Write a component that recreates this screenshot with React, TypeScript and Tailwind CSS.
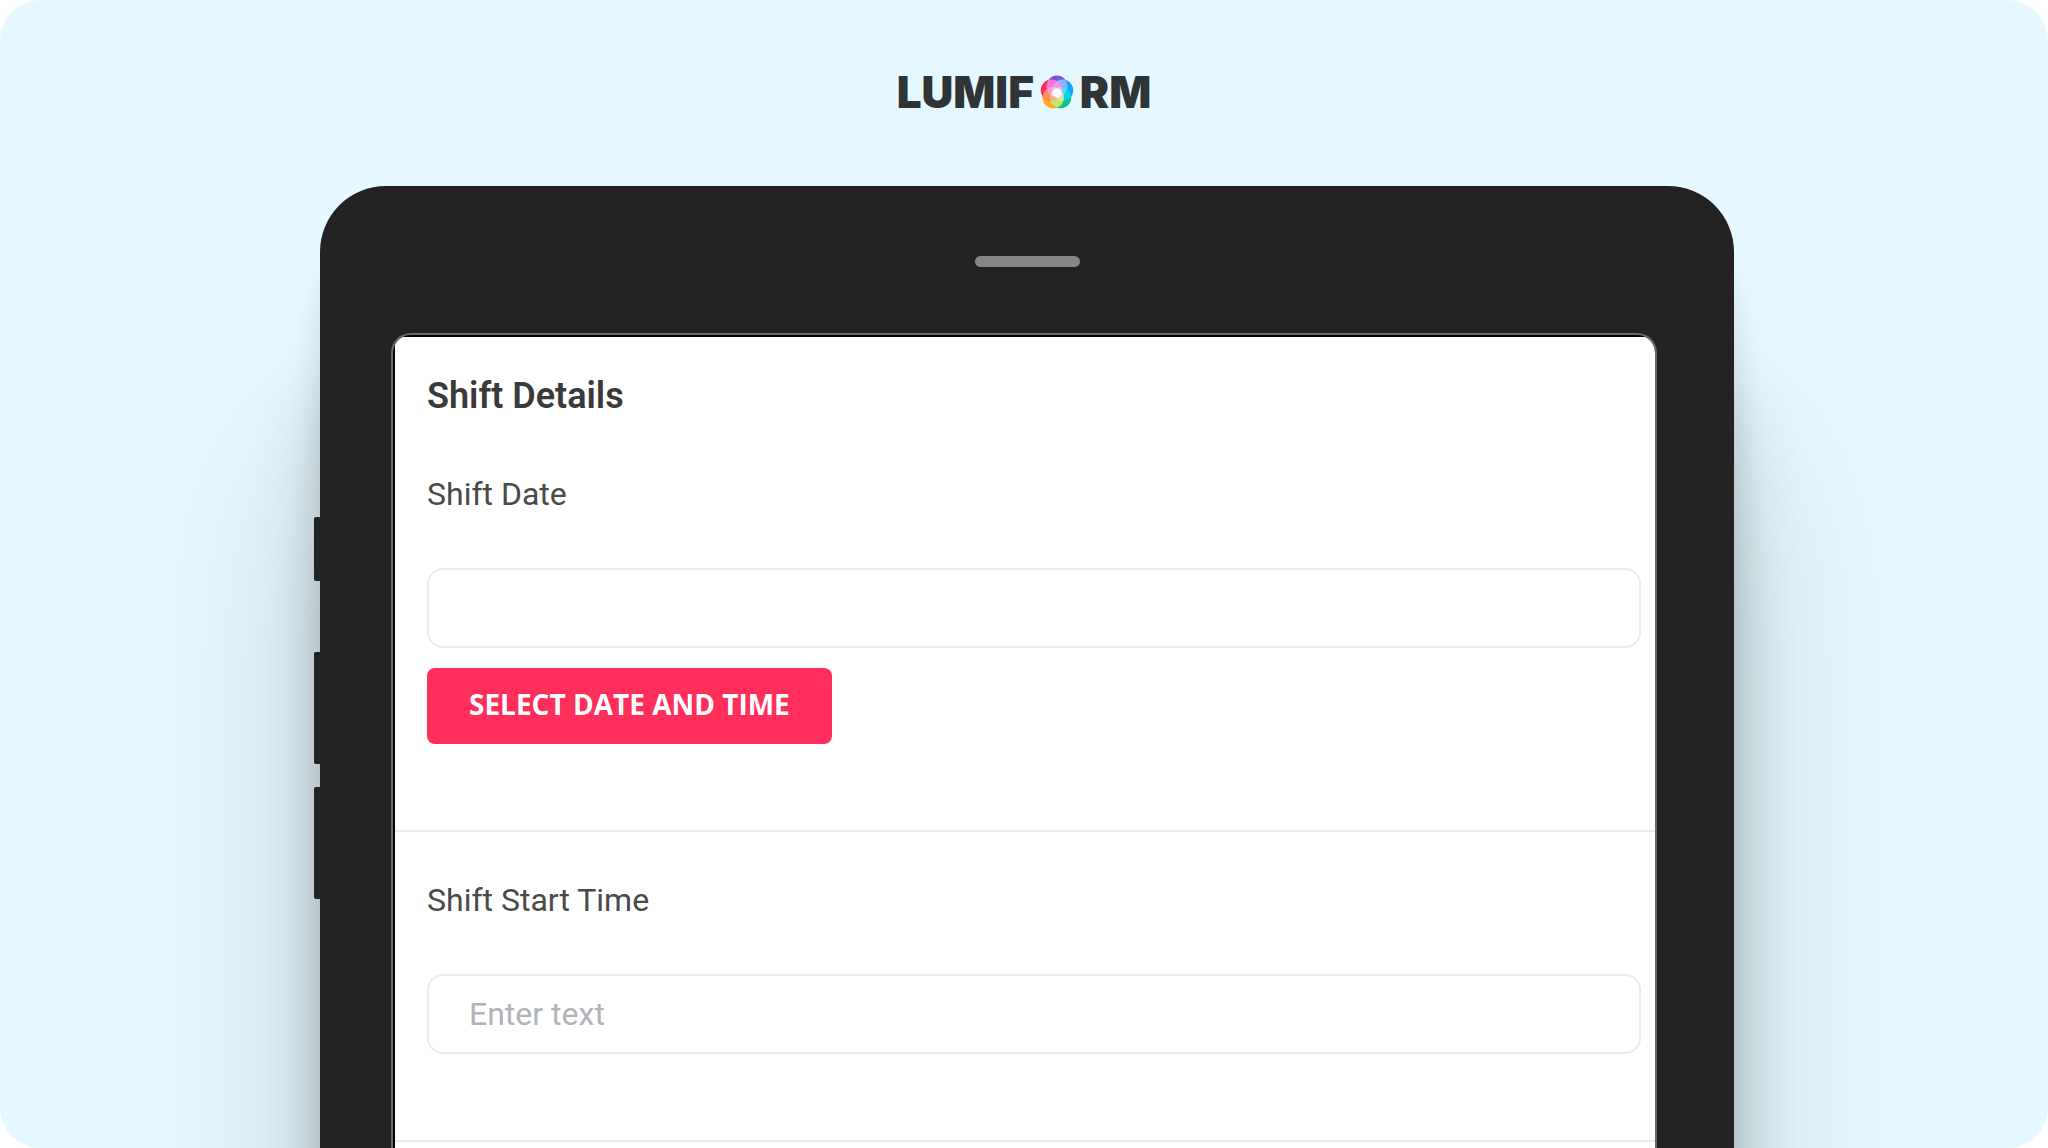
const petals = [
    { id: "top", cx: 16, cy: 10.5, fill: "#7b55d3" },
    { id: "right", cx: 21.3, cy: 14.3, fill: "#0aa5ff" },
    { id: "low-right", cx: 19.4, cy: 21.3, fill: "#0cc48a" },
    { id: "low-left", cx: 12.4, cy: 21.3, fill: "#ffa62b" },
    { id: "left", cx: 10.7, cy: 14.3, fill: "#fa2d5f" },
];

// colour of the lens shared by a petal and the next one clockwise
const overlaps = ["#8fb2ff", "#10cfe8", "#c4e86a", "#ff8f62", "#f774d8"];

// colour of the lens shared by a petal and the one after next
const innerOverlaps = ["#a8e4ff", "#d5f5ff", "#ffe08a", "#ffd0c0", "#f3b6ff"];

function Flower() {
    return (
        <svg viewBox="0 0 32 32" className="size-[34px]" aria-hidden="true">
            <defs>
                {petals.map((p) => (
                    <clipPath id={p.id} key={p.id}>
                        <circle cx={p.cx} cy={p.cy} r="10" />
                    </clipPath>
                ))}
            </defs>
            {petals.map((p) => (
                <circle key={p.id} cx={p.cx} cy={p.cy} r="10" fill={p.fill} />
            ))}
            {petals.map((p, i) => {
                const next = petals[(i + 1) % 5];
                return (
                    <g key={p.id} clipPath={`url(#${p.id})`}>
                        <circle cx={next.cx} cy={next.cy} r="10" fill={overlaps[i]} />
                    </g>
                );
            })}
            {petals.map((p, i) => {
                const across = petals[(i + 2) % 5];
                return (
                    <g key={p.id} clipPath={`url(#${p.id})`}>
                        <circle cx={across.cx} cy={across.cy} r="10" fill={innerOverlaps[i]} opacity="0.45" />
                    </g>
                );
            })}
            <circle cx="16" cy="17" r="4.5" fill="#ffffff" opacity="0.85" />
        </svg>
    );
}

function Logo() {
    return (
        <div className="flex items-center justify-center gap-1.5 font-['Inter',sans-serif] text-[44px] leading-[44px] font-black text-[#2f3437]">
            <span>LUMIF</span>
            <Flower />
            <span>RM</span>
        </div>
    );
}

const fieldClass =
    "mt-14 block h-20 w-full rounded-2xl border-2 border-[#ebebeb] bg-white px-10 text-[32px] text-[#3c3c3c] placeholder:text-[#b0b3b8]";

export default function App() {
    return (
        <div className="bg-white">
            <main className="flex h-screen flex-col overflow-hidden rounded-[40px] bg-[#e6f8ff] pt-[70px] font-['Roboto',sans-serif]">
                <Logo />

                <div className="mt-[72px] flex flex-1 flex-col pr-[314px] pl-80">
                    <div className="relative flex flex-1 flex-col rounded-t-[66px] bg-[#232122] pt-[70px] shadow-[0_70px_30px_rgba(0,0,0,0.12),0_180px_70px_rgba(0,0,0,0.14),0_270px_180px_rgba(0,0,0,0.18)]">
                        {/* side buttons */}
                        <div className="absolute top-[331px] -left-[6px] flex w-2 flex-col">
                            <span className="h-16 rounded-l-xs bg-[#212223]" />
                            <span className="mt-[71px] h-28 rounded-l-xs bg-[#212223]" />
                            <span className="mt-[23px] h-28 rounded-l-xs bg-[#212223]" />
                        </div>

                        <div className="mx-auto h-[11px] w-[105px] rounded-full bg-[#868686]" />

                        <div className="mt-[66px] mr-[77px] ml-[71px] flex flex-1 flex-col overflow-hidden rounded-t-[20px] border-2 border-b-0 border-[#6a6969] bg-black pt-[2px] pl-[2px]">
                            <form className="flex-1 bg-white">
                                <section className="border-b-2 border-[#ebebeb] pt-[41px] pr-[14px] pb-[86px] pl-8">
                                    <h1 className="text-[36px] leading-9 font-semibold text-[#3a3a3a]">
                                        Shift Details
                                    </h1>
                                    <label htmlFor="shift-date" className="mt-[62px] block text-[32px] leading-9 text-[#4a4a4a]">
                                        Shift Date
                                    </label>
                                    <input id="shift-date" type="text" className={fieldClass} />
                                    <button
                                        type="button"
                                        className="mt-5 h-[76px] rounded-lg bg-[#ff2e5b] px-[42px] pb-1 font-['Open_Sans',sans-serif] text-[28px] font-bold text-white"
                                    >
                                        SELECT DATE AND TIME
                                    </button>
                                </section>

                                <section className="border-b-2 border-[#ebebeb] pt-[50px] pr-[14px] pb-[86px] pl-8">
                                    <label htmlFor="shift-start" className="block text-[32px] leading-9 text-[#4a4a4a]">
                                        Shift Start Time
                                    </label>
                                    <input id="shift-start" type="text" placeholder="Enter text" className={fieldClass} />
                                </section>
                            </form>
                        </div>
                    </div>
                </div>
            </main>
        </div>
    );
}
